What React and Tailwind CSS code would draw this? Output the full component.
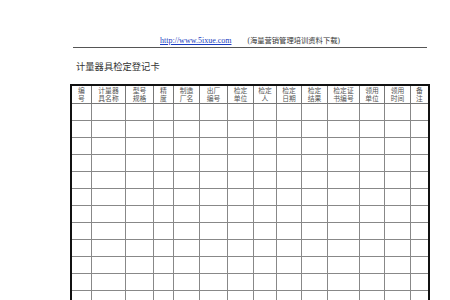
const headers = [
  ["编", "号"],
  ["计量器", "具名称"],
  ["型号", "规格"],
  ["精", "度"],
  ["制造", "厂名"],
  ["出厂", "编号"],
  ["检定", "单位"],
  ["检定", "人"],
  ["检定", "日期"],
  ["检定", "结果"],
  ["检定证", "书编号"],
  ["领用", "单位"],
  ["领用", "时间"],
  ["备", "注"],
];

const rows = Array.from({ length: 12 });

const serif = { fontFamily: '"Liberation Serif", "Noto Sans CJK SC", serif' };

export default function App() {
  return (
    <div className="w-[450px] h-[300px] overflow-hidden bg-white" style={serif}>
      <div className="ml-[73px] w-[354px] pt-[35px] border-b border-[#555]">
        <div className="flex items-center pl-[87px] h-[11px] mb-[1px] text-[8px] leading-[11px] text-[#333] whitespace-nowrap">
          <span className="text-[#1a3cc0] underline">http://www.5ixue.com</span>
          <span className="ml-[16px] text-[7.3px]">(海量营销管理培训资料下载)</span>
        </div>
      </div>

      <div className="ml-[76px] mt-[13px] text-[9.3px] leading-[12px] text-[#333]">计量器具检定登记卡</div>

      <div className="ml-[70px] mt-[11px] w-[360px] border-2 border-b-0 border-[#111]">
        <div className="grid grid-cols-[20px_34px_28px_20px_26px_28px_26px_23px_25px_26px_32px_25px_26px_17px]">
          {headers.map((h, i) => (
            <div
              key={i}
              className={`h-[18px] border-b border-[#777] flex flex-col items-center pt-[1px] text-[6.8px] leading-[8px] text-[#555] whitespace-nowrap ${i < headers.length - 1 ? "border-r" : ""}`}
            >
              <span>{h[0]}</span>
              <span>{h[1]}</span>
            </div>
          ))}
          {rows.map((_, r) =>
            headers.map((h, i) => (
              <div
                key={`${r}-${i}`}
                className={`h-[17px] border-b border-[#888] ${i < headers.length - 1 ? "border-r" : ""}`}
              />
            ))
          )}
        </div>
      </div>
    </div>
  );
}
